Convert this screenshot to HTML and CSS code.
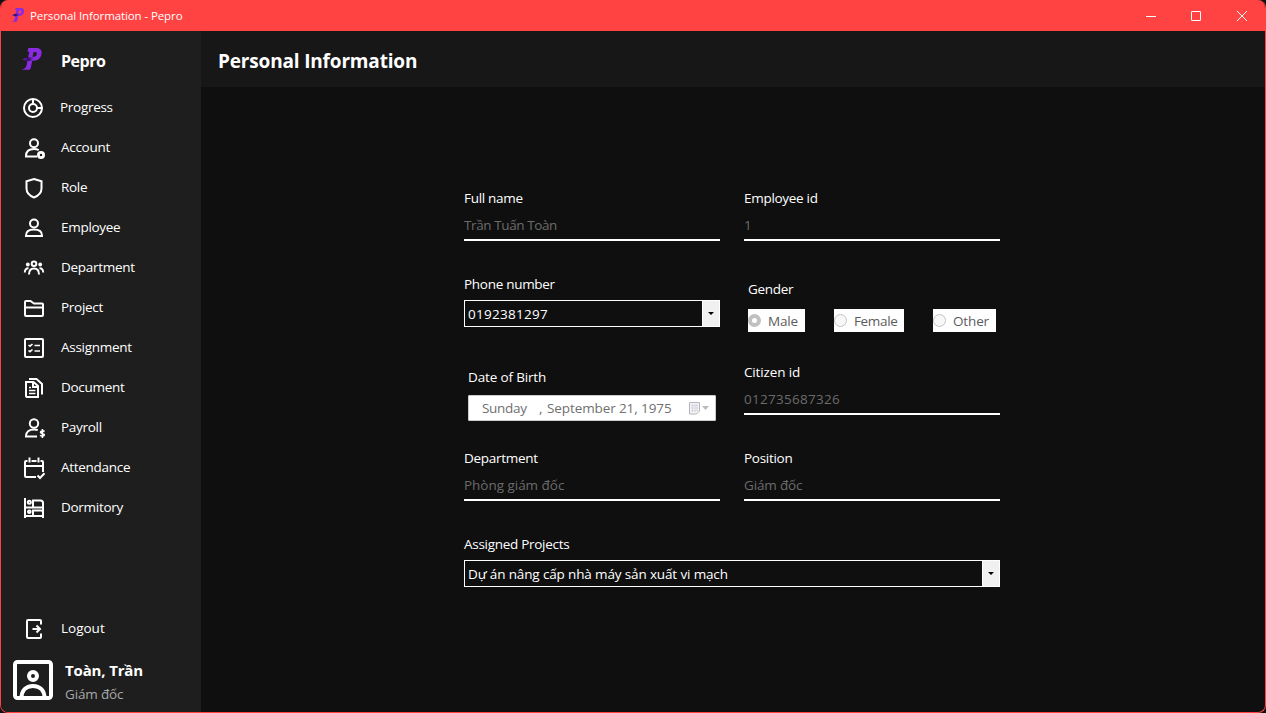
FILE: index.html
```
<!DOCTYPE html>
<html lang="en">
<head>
<meta charset="utf-8">
<title>Personal Information - Pepro</title>
<link rel="stylesheet" href="styles.css">
</head>
<body>
<svg width="0" height="0" class="defs">
  <defs>
    <linearGradient id="tail" x1="0" y1="0" x2="1" y2="0"><stop offset="0" stop-color="#7a22c8"/><stop offset=".5" stop-color="#32105e"/><stop offset="1" stop-color="#8a2be2"/></linearGradient>
    <symbol id="logo" viewBox="0 0 22 24">
      <path fill-rule="evenodd" d="M7.300 1H15c4.500 0 6.300 2.500 5.500 6.300-.8 4.200-3.700 6.400-7.700 6.400h-1.600L9.900 20.500c-.4 1.800-1 2.300-2.700 2.300H.5C3.500 21.800 5 20.800 5.500 18.500L8.300 4.700H6.500zM12.600 5L11.500 9.800h1.500c1.600 0 2.500-.9 2.800-2.500.3-1.500-.4-2.300-1.900-2.300z" fill="#8a2be2"/>
      <path d="M1.500 12.200C4 10.500 7 9.900 13 10.200l-2 3.500C7 14.200 4 14 1.500 12.200z" fill="url(#tail)"/>
    </symbol>
  </defs>
</svg>
<div class="window">
  <header class="titlebar">
    <svg class="app-icon" viewBox="0 0 22 24"><use href="#logo"/></svg>
    <span class="caption">Personal Information - Pepro</span>
    <div class="controls">
      <svg viewBox="0 0 10 10"><path d="M0 5.500h10"/></svg>
      <svg viewBox="0 0 10 10"><rect x=".5" y=".5" width="9" height="9" rx=".5"/></svg>
      <svg viewBox="0 0 10 10"><path d="M0 0l10 10M10 0L0 10"/></svg>
    </div>
  </header>
  <div class="body">
    <aside class="sidebar">
      <div class="brand"><svg class="brand-logo" viewBox="0 0 22 24"><use href="#logo"/></svg><span class="brand-name">Pepro</span></div>
      <nav class="menu">
        <a class="item"><svg class="icon" viewBox="0 0 24 24"><circle cx="11" cy="12" r="9"/><circle cx="11" cy="12" r="4"/><path d="M11 3v5M15 12h5"/></svg><span class="progress-label">Progress</span></a>
        <a class="item"><svg class="icon" viewBox="0 0 24 24"><circle cx="12" cy="7.200" r="4"/><path d="M15 20.500H4v-.5c0-4.500 3-7 8-7 2 0 3.500.4 4.700 1.200"/><circle class="badge" cx="19" cy="19" r="2.600"/></svg><span>Account</span></a>
        <a class="item"><svg class="icon" viewBox="0 0 24 24"><path d="M12 3l7.500 2.200v7.300c0 4-2.500 7-7.500 9-5-2-7.500-5-7.500-9V5.200z"/></svg><span>Role</span></a>
        <a class="item"><svg class="icon" viewBox="0 0 24 24"><circle cx="12" cy="7.500" r="4"/><path d="M4 20v-.5c0-4 3-6 8-6s8 2 8 6v.5z"/></svg><span>Employee</span></a>
        <a class="item"><svg class="icon" viewBox="0 0 24 24"><circle cx="12" cy="7.700" r="2.300"/><path d="M7 18.500c0-4 2-6 5-6s5 2 5 6M2.800 16.500c0-2.800 1.200-4.300 3.700-4.300M21.200 16.500c0-2.800-1.200-4.300-3.700-4.300"/><circle class="dot" cx="5.800" cy="8.500" r="1.900"/><circle class="dot" cx="18.200" cy="8.500" r="1.900"/></svg><span>Department</span></a>
        <a class="item"><svg class="icon" viewBox="0 0 24 24"><path d="M3 18.500V6q0-1 1-1h4.500L12 7.500h8q1 0 1 1v10.500q0 1-1 1H4q-1 0-1-1zM3 11.500h18"/></svg><span>Project</span></a>
        <a class="item"><svg class="icon" viewBox="0 0 24 24"><rect x="3" y="3" width="18" height="18" rx="1"/><path class="thin" d="M6.500 9l1.500 1.200L10.500 8M6.500 14.500L8 15.700l2.500-2.200M12.500 9.500H18M12.500 15H18"/></svg><span>Assignment</span></a>
        <a class="item"><svg class="icon" viewBox="0 0 24 24"><path d="M4 6h7.500L16 10v11H5q-1 0-1-1zM7 3h7.500l5.500 5v10.500M11 6v5h5"/><path class="thin" d="M7 11.500h2M7 14.500h6.500M7 17.500h6.500"/></svg><span>Document</span></a>
        <a class="item"><svg class="icon" viewBox="0 0 24 24"><circle cx="12" cy="7.500" r="4.200"/><path d="M15 20.500H4v-.5c0-4.200 3-6.500 8-6.500 1.500 0 2.800.2 3.800.6"/><path class="thin" d="M22.500 15.500c-1.500-1-4-.7-4 .7 0 1.700 3.800.8 3.800 2.600 0 1.400-2.600 1.700-4.300.6M20.400 13v9"/></svg><span>Payroll</span></a>
        <a class="item"><svg class="icon" viewBox="0 0 24 24"><path d="M14 21H4q-1 0-1-1V6q0-1 1-1h16q1 0 1 1v10M3 10h18"/><path class="knockout" d="M5.500 5h4M14.500 5h4"/><path d="M7.500 1.500v5M16.500 1.500v5M15.500 19.500l2.500 2.500 4.500-4.700"/></svg><span>Attendance</span></a>
        <a class="item"><svg class="icon" viewBox="0 0 24 24"><path d="M3 2v20M21 20v2M3 11.500h18M3 20h18M11 11.500V4.500h7.500q2.500 0 2.500 2.500V20M11 20v-5.500h8q2 0 2 2"/><circle cx="7.300" cy="6.300" r="1.500"/><circle cx="7.300" cy="15.800" r="1.300"/></svg><span>Dormitory</span></a>
      </nav>
      <a class="item logout"><svg class="icon" viewBox="0 0 24 24"><path d="M19 7.500V4q0-1-1-1H6Q5 3 5 4v16q0 1 1 1h12q1 0 1-1v-3.500M10.500 12h7M14.500 8.500l3.500 3.500-3.500 3.500"/></svg><span>Logout</span></a>
      <div class="user">
        <svg class="avatar" viewBox="0 0 40 40"><rect x="2" y="2" width="36" height="36" rx="2.500"/><circle cx="20" cy="16" r="4"/><path d="M8.500 38c0-7.500 4.500-12 11.500-12s11.500 4.500 11.500 12"/></svg>
        <div class="user-text"><div class="user-name">Toàn, Trần</div><div class="user-role">Giám đốc</div></div>
      </div>
    </aside>
    <main class="content">
      <div class="page-head"><h1>Personal Information</h1></div>
      <form class="form">
        <div class="field"><label>Full name</label><div class="line-input full-name">Trần Tuấn Toàn</div></div>
        <div class="field"><label>Employee id</label><div class="line-input">1</div></div>
        <div class="field"><label>Phone number</label><div class="combo"><span class="digits">0192381297</span><i class="drop"></i></div></div>
        <div class="field inset"><label>Gender</label>
          <div class="radios">
            <span class="radio male"><i class="ring checked"></i>Male</span>
            <span class="radio female"><i class="ring"></i>Female</span>
            <span class="radio other"><i class="ring"></i>Other</span>
          </div>
        </div>
        <div class="field inset"><label class="roomy">Date of Birth</label>
          <div class="date"><span class="weekday">Sunday</span><span class="comma">,</span><span class="day">September 21, 1975</span>
            <svg class="calendar" viewBox="0 0 20 13"><path d="M.5.5h10v8.500l-3 3h-7z" fill="#f3f3f6" stroke="#b5b5bd"/><path d="M2 3.500h7M2 6h7M2 8.500h7M3.500 2v8M6 2v8M8 2v7" stroke="#d0d0da" stroke-width=".7" fill="none"/><path d="M13 4h7l-3.500 4z" fill="#bcbcb4"/></svg>
          </div>
        </div>
        <div class="field"><label class="roomy">Citizen id</label><div class="line-input digits">012735687326</div></div>
        <div class="field"><label>Department</label><div class="line-input department">Phòng giám đốc</div></div>
        <div class="field"><label>Position</label><div class="line-input">Giám đốc</div></div>
        <div class="field wide"><label>Assigned Projects</label><div class="combo"><span class="project-name">Dự án nâng cấp nhà máy sản xuất vi mạch</span><i class="drop"></i></div></div>
      </form>
    </main>
  </div>
</div>
</body>
</html>
```
FILE: styles.css
```
* { box-sizing: border-box; }
body {
  margin: 0;
  background: #111;
  color: #fff;
  font: 13.5px/20px "Open Sans", "Noto Sans", sans-serif;
  letter-spacing: -0.29px;
}
.defs { position: absolute; }
.window {
  width: 1266px;
  height: 713px;
  display: flex;
  flex-direction: column;
  border: 1px solid #ff4343;
  border-top: 0;
  border-radius: 8px;
  overflow: hidden;
  background: #0f0f0f;
}
.titlebar {
  height: 31px;
  flex: none;
  display: flex;
  align-items: center;
  background: #ff4343;
  padding-left: 10px;
}
.app-icon { width: 14px; height: 16px; margin-top: -1px; }
.caption { margin-left: 5px; font-size: 11.5px; letter-spacing: -0.1px; }
.controls { margin-left: auto; display: flex; gap: 35px; padding-right: 18px; }
.controls svg { width: 10px; height: 10px; fill: none; stroke: #fff; stroke-width: 1; overflow: visible; }
.controls svg:last-child { margin-left: 1px; }
.body { flex: 1; display: flex; min-height: 0; }
.sidebar {
  width: 200px;
  flex: none;
  background: #1e1e1e;
  display: flex;
  flex-direction: column;
  padding-bottom: 11px;
}
.brand { height: 56px; display: flex; align-items: center; padding: 2px 0 0 20px; }
.brand-logo { width: 22px; height: 24px; margin-top: -2px; }
.brand-name { margin-left: 18px; font-size: 16px; font-weight: 700; letter-spacing: -0.5px; padding-top: 1px; }
.item { height: 40px; display: flex; align-items: center; gap: 15px; padding-left: 21px; }
.icon { width: 24px; height: 24px; margin-top: 2px; fill: none; stroke: #fff; stroke-width: 2; }
.thin { stroke-width: 1.6; }
.badge { stroke-width: 2.800; }
.dot { fill: #fff; stroke: none; }
.knockout { stroke: #1e1e1e; stroke-width: 2.500; }
.progress-label { margin-left: -1px; }
.logout { margin-top: auto; letter-spacing: 0; }
.user { height: 53px; display: flex; align-items: flex-end; gap: 12px; padding-left: 12px; }
.avatar { width: 40px; height: 40px; margin-bottom: 1px; fill: none; stroke: #fff; stroke-width: 4; }
.user-text { height: 41px; display: flex; flex-direction: column; gap: 4px; }
.user-name { font-size: 15px; font-weight: 700; letter-spacing: -0.15px; }
.user-role { color: #a8a8a8; letter-spacing: -0.15px; }
.content { flex: 1; }
.page-head { height: 56px; background: #171717; padding: 17px 0 0 17px; }
h1 { margin: 0; font-size: 19px; line-height: 26px; font-weight: 700; letter-spacing: -0.17px; }
.form {
  display: grid;
  grid-template-columns: 256px 256px;
  grid-template-rows: 86px 88px 86px 86px 53px;
  column-gap: 24px;
  margin: 101px 0 0 263px;
}
.wide { grid-column: span 2; }
.field label { display: block; height: 20px; }
.field .roomy { letter-spacing: -0.15px; }
.line-input { height: 33px; padding-top: 7px; border-bottom: 2px solid #fff; color: #6b6b6b; letter-spacing: -0.15px; }
.full-name { letter-spacing: -0.4px; }
.department { letter-spacing: -0.03px; }
.digits { letter-spacing: 0.28px; }
.project-name { letter-spacing: -0.14px; }
.combo { height: 27px; margin-top: 6px; border: 1px solid #fff; display: flex; align-items: center; padding-left: 3px; }
.drop { margin-left: auto; width: 18px; align-self: stretch; background: #f0f0f0; border-left: 1px solid #fff; display: flex; align-items: center; justify-content: center; margin-right: -1px; border-right: 1px solid #fff; }
.drop::before { content: ""; border: 3px solid transparent; border-top-color: #000; border-bottom: 0; }
.inset { padding: 5px 4px 0; }
.radios { display: flex; margin-top: 10px; justify-content: space-between; letter-spacing: -0.15px; }
.radio { height: 23px; display: flex; align-items: center; gap: 7px; background: #fff; color: #5c5c5c; padding-top: 1px; }
.male { width: 57px; }
.female { width: 70px; letter-spacing: -0.35px; }
.other { width: 63px; }
.ring { width: 13px; height: 13px; margin-top: -1px; border: 1px solid #c4c4c4; border-radius: 50%; background: #f7f7f7; }
.checked { border: 4px solid #c0c0c0; background: #fff; }
.date { height: 26px; margin-top: 8px; display: flex; align-items: center; background: #fff; border: 1px solid #ccc; border-radius: 1px; color: #707070; padding-left: 13px; letter-spacing: -0.1px; }
.weekday { width: 57px; letter-spacing: -0.3px; }
.comma { width: 8px; }
.calendar { width: 20px; height: 13px; margin: 0 6px 0 auto; }
```
